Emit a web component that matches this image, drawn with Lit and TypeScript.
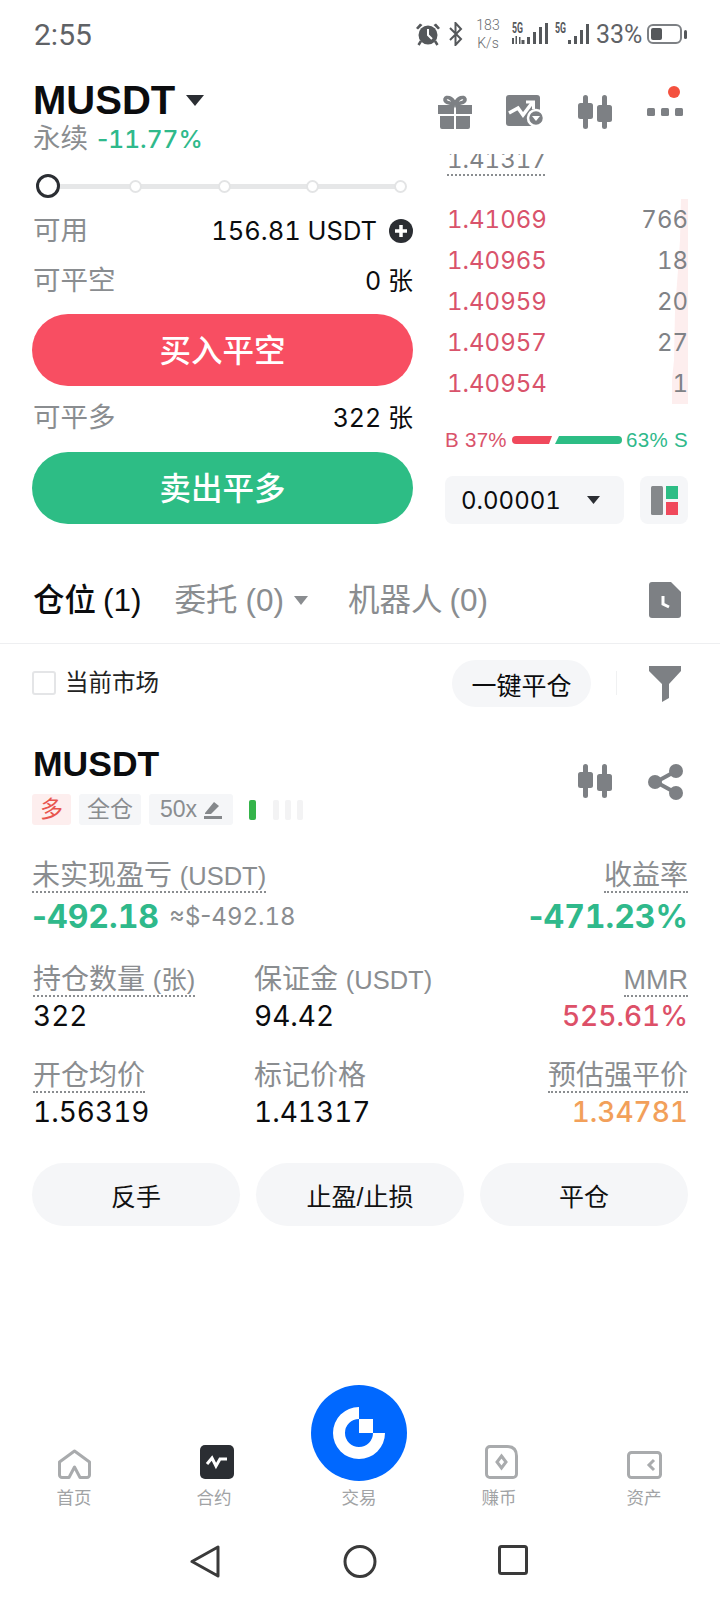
import { LitElement, html, css } from "lit";
import { customElement } from "lit/decorators.js";

const candle = html`<svg class="ic" width="34" height="34" viewBox="0 0 34 34"><g fill="#7d8084"><rect x="5" y="0" width="5" height="34" rx="2.500"/><rect x="0" y="8" width="15" height="16" rx="2.500"/><rect x="24" y="0" width="5" height="34" rx="2.500"/><rect x="19" y="10" width="15" height="17" rx="2.500"/></g></svg>`;

const rows = [["1.41069", "766"], ["1.40965", "18"], ["1.40959", "20"], ["1.40957", "27"], ["1.40954", "1"]];

@customElement("app-root")
export class AppRoot extends LitElement {
  static styles = css`
    :host { display: block; width: 720px; height: 1600px; background: #fff; color: #0b0c0e; overflow: hidden;
      font-family: "Liberation Sans", "Noto Sans CJK SC", sans-serif; }
    * { box-sizing: border-box; }
    .page { display: flex; flex-direction: column; height: 1600px; }
    svg { display: block; flex: none; }
    .num { font-family: Inter, "Noto Sans CJK SC", sans-serif; font-variant-numeric: tabular-nums; }
    .m { font-style: normal; font-variant-numeric: normal; }

    .status { height: 68px; display: flex; align-items: center; padding: 0 0 0 34px; color: #5f6266; flex: none; }
    .time { font: 400 30px Roboto, sans-serif; width: 381px; flex: none; }
    .speed { font: 300 14px/18px Roboto, sans-serif; width: 36px; margin-left: 7px; text-align: center; color: #6a6d70; flex: none; }
    .sig { margin-left: 7px; }
    .s5 { font: 700 14px Roboto, sans-serif; fill: #55585b; }
    .batt { font: 400 25px Roboto, sans-serif; margin-left: 5px; flex: none; }

    .head { height: 86px; flex: none; padding: 8px 37px 0 33px; display: flex; justify-content: space-between; }
    .title { font-size: 40px; font-weight: 700; line-height: 42px; display: flex; align-items: center; gap: 11px; margin-top: 3px; }
    .sub { font-size: 27.5px; line-height: 34px; color: #8a8d90; display: flex; gap: 9px; margin-top: 1px; align-items: center; }
    .sub b { color: #2fb98b; font-weight: 500; font-size: 24.5px; }
    .head-ic { display: flex; gap: 34px; margin-top: 19px; position: relative; align-items: flex-start; }
    .dots { margin-left: 1px; margin-top: 13px; }
    .red-dot { position: absolute; right: 3px; top: -9px; width: 12px; height: 12px; border-radius: 50%; background: #f4513f; }

    .main { flex: none; display: flex; gap: 32px; padding: 0 32px; height: 370px; }
    .left { width: 381px; display: flex; flex-direction: column; }
    .slider { height: 24px; margin-top: 20px; position: relative; display: flex; align-items: center; gap: 75.3px; padding: 0 0 0 4px; }
    .slider::before { content: ""; position: absolute; left: 20px; right: 12px; top: 10px; height: 5px; background: #e6e7e8; }
    .knob { position: relative; width: 24px; height: 24px; border: 3px solid #2b2e33; border-radius: 50%; background: #fff; margin-right: -6px; }
    .tick { position: relative; width: 13px; height: 13px; border: 2px solid #e3e4e5; border-radius: 50%; background: #fff; }
    .kv { display: flex; justify-content: space-between; align-items: center; height: 50px; font-size: 27.5px; line-height: 36px; color: #8a8d90; padding-left: 1px; }
    .kv span:last-child { color: #0b0c0e; }
    .val { display: flex; align-items: center; gap: 12px; font-size: 25.5px; }
    .val-plain { font-size: 25px; }
    .first { margin-top: 8px; }
    .btn { height: 72px; border-radius: 36px; color: #fff; font-size: 31.5px; font-weight: 500; display: flex; align-items: center; justify-content: center; flex: none; padding-bottom: 4px; }
    .buy { background: #f84e62; margin-top: 8px; }
    .sell { background: #2dbd85; margin-top: 9px; }
    .k3 { margin-top: 7px; }

    .right { width: 243px; display: flex; flex-direction: column; }
    .clip { height: 22px; overflow: hidden; position: relative; margin-left: 2px; width: 98px; border-bottom: 2px dotted #8a8d90; flex: none; }
    .clip span { position: absolute; left: 0; bottom: 0; font-size: 24px; line-height: 28px; color: #7f8286; }
    .book { position: relative; margin-top: 23px; height: 205px; flex: none; }
    .depth { position: absolute; right: 0; top: 0; }
    .row { position: relative; height: 41px; display: flex; justify-content: space-between; align-items: center; font-size: 24px; padding-left: 2px; color: #7f8286; }
    .row b { font-weight: 400; color: #d9536b; }
    .senti { display: flex; align-items: center; height: 24px; margin-top: 24px; font-size: 20.500px; justify-content: space-between; flex: none; letter-spacing: .3px; }
    .senti .r { color: #d9536b; }
    .senti .g { color: #2fb98b; }
    .tools { display: flex; gap: 16px; margin-top: 24px; flex: none; }
    .sel { width: 179px; height: 48px; background: #f5f6f8; border-radius: 8px; display: flex; align-items: center; justify-content: space-between; padding: 0 24px 0 16px; font-size: 24px; }
    .lay { width: 48px; height: 48px; background: #f5f6f8; border-radius: 8px; display: flex; align-items: center; justify-content: center; }

    .tabs { flex: none; height: 120px; padding: 52px 39px 0 33px; display: flex; border-bottom: 1px solid #eeeff1; font-size: 31.5px; color: #8a8d90; align-items: flex-start; line-height: 48px; }
    .tab { display: flex; align-items: center; gap: 7px; }
    .tab.on { color: #0b0c0e; font-weight: 500; }
    .t2 { margin-left: 33px; gap: 8px; }
    .t3 { margin-left: 40px; }
    .doc { margin-left: auto; margin-top: 6px; }

    .filter { flex: none; height: 81px; padding: 16px 39px 0 32px; display: flex; align-items: flex-start; }
    .check { width: 24px; height: 24px; border: 2px solid #e4e5e7; border-radius: 3px; margin-top: 11px; }
    .flabel { font-size: 23.5px; line-height: 47px; margin-left: 9px; color: #222; }
    .pill { margin-left: auto; width: 139px; height: 47px; border-radius: 24px; background: #f5f6f8; font-size: 25px; display: flex; align-items: center; justify-content: center; }
    .sep { width: 1px; height: 24px; background: #f0f1f2; margin: 11px 32px 0 25px; }
    .fun { margin-top: 6px; }

    .card { flex: none; padding: 0 32px; }
    .chead { display: flex; justify-content: space-between; }
    .cname { font-size: 35.5px; font-weight: 700; line-height: 40px; padding-left: 1px; margin-top: 19px; }
    .cic { display: flex; gap: 36px; margin-top: 39px; margin-right: 4px; margin-bottom: -6px; }
    .tags { display: flex; gap: 8px; align-items: center; height: 31px; }
    .tag { height: 31px; background: #f5f6f8; color: #8a8d90; font-size: 23px; line-height: 31px; border-radius: 3px; display: flex; align-items: center; justify-content: center; gap: 7px; }
    .t-a { width: 39px; background: #fdeeee; color: #e8554e; }
    .t-b { width: 62px; }
    .t-c { width: 84px; }
    .bars { display: flex; gap: 6px; margin-left: 8px; }
    .bars i { width: 6px; height: 20px; background: #f3f3f4; border-radius: 2px; }
    .bars i:first-child { background: #35b44a; width: 7px; margin-right: 11px; }

    .l { font-size: 28px; color: #8a8d90; line-height: 30px; height: 32px; white-space: nowrap; }
    .lat { font-size: 25.5px; }
    .lat2 { font-size: 27px; }
    .dot { border-bottom: 2px dotted #8a8d90; display: inline-block; }
    .pnl { display: flex; justify-content: space-between; align-items: flex-start; margin-top: 36px; }
    .pnl > div:last-child { text-align: right; }
    .big { font-size: 32px; font-weight: 700; color: #2fb98b; line-height: 40px; display: flex; align-items: center; gap: 10px; margin-top: 4px; white-space: nowrap; }
    .big span { font-size: 24px; font-weight: 400; color: #8a8d90; }
    .big.end { justify-content: flex-end; }
    .stats { display: grid; grid-template-columns: 221px 222px 1fr; padding-left: 1px; }
    .stats > div:nth-child(3n) { text-align: right; }
    .s1 { margin-top: 28px; }
    .s2 { margin-top: 27px; }
    .v { font-size: 28px; line-height: 36px; color: #0b0c0e; margin-top: 1px; }
    .v.red { color: #dd5068; font-weight: 500; }
    .v.org { color: #f2a05a; font-weight: 500; }
    .acts { display: flex; gap: 16px; margin-top: 33px; }
    .act { flex: 1; height: 63px; border-radius: 32px; background: #f5f6f8; font-size: 25px; display: flex; align-items: center; justify-content: center; color: #111; }

    .nav { margin-top: auto; flex: none; height: 102px; display: flex; gap: 100px; padding-left: 54px; align-items: flex-end; }
    .ni { position: relative; width: 40px; display: flex; flex-direction: column; align-items: center; font-size: 17.5px; line-height: 24px; color: #a1a3a5; white-space: nowrap; gap: 7px; height: 66px; justify-content: flex-end; }
    .shift { margin-left: 5px; }
    .nudge { margin-left: 5px; }
    .fab { position: absolute; left: -28px; top: -59px; width: 96px; height: 96px; border-radius: 50%; background: #0068ff; display: flex; align-items: center; justify-content: center; }
    .sys { flex: none; height: 90px; padding: 35px 0 0 190px; display: flex; gap: 121px; align-items: flex-start; }
  `;

  render() {
    return html`<div class="page">
      <div class="status">
        <div class="time">2:55</div>
        <svg width="26" height="24" viewBox="0 0 26 24"><g fill="#55585b"><circle cx="13" cy="13" r="9.500"/><path d="M1 6 5 1.500 7.500 3 3 7.500ZM25 6 21 1.500 18.500 3 23 7.500Z"/><path d="M6 19 3.500 23M20 19 22.500 23" stroke="#55585b" stroke-width="2.500"/></g><path d="M13 7v6l4 4" stroke="#fff" stroke-width="2" fill="none"/></svg>
        <svg style="margin-left:8px" width="14" height="24" viewBox="0 0 14 24" fill="none" stroke="#55585b" stroke-width="2"><path d="M1 6 12 17 6.500 23V1L12 7 1 18"/></svg>
        <div class="speed">183<br />K/s</div>
        <svg style="margin-left:6px" width="36" height="28" viewBox="0 -2 36 28"><text class="s5" x="0" y="11" textLength="11" lengthAdjust="spacingAndGlyphs">5G</text><g fill="#55585b"><rect x="0" y="16" width="2" height="6"/><rect x="3.500" y="14" width="1.500" height="8"/><rect x="7" y="15" width="1.500" height="7"/><rect x="9.500" y="18" width="3" height="4"/><rect x="15" y="15" width="3" height="7"/><rect x="21" y="10" width="3" height="12"/><rect x="27" y="5" width="3" height="17"/><rect x="33" y="1" width="3" height="21"/></g></svg>
        <svg class="sig" width="36" height="28" viewBox="0 -2 36 28"><text class="s5" x="0" y="11" textLength="11" lengthAdjust="spacingAndGlyphs">5G</text><g fill="#55585b"><rect x="13" y="18" width="3" height="4"/><rect x="19" y="14" width="3" height="8"/><rect x="25" y="8" width="3" height="14"/><rect x="31" y="2" width="3" height="20"/></g></svg>
        <div class="batt">33%</div>
        <svg style="margin-left:5px" width="40" height="22" viewBox="0 0 40 22"><rect x="1" y="2" width="33" height="18" rx="5" fill="none" stroke="#7d8084" stroke-width="2"/><rect x="4" y="5" width="11" height="12" rx="2" fill="#55585b"/><rect x="37" y="7" width="3" height="9" rx="1.500" fill="#55585b"/></svg>
      </div>

      <div class="head">
        <div>
          <div class="title">MUSDT<svg width="18" height="11" viewBox="0 0 18 11"><path d="M0 0h18L9 11Z" fill="#2b2e33"/></svg></div>
          <div class="sub">永续<b class="num"><i class="m">-</i>11.77%</b></div>
        </div>
        <div class="head-ic">
          <svg width="34" height="34" viewBox="0 0 34 34"><g fill="#7d8084"><path d="M0 10h16v9H0ZM18 10H34v9H18ZM2 21h14v13H4a2 2 0 0 1-2-2ZM18 21H32v11a2 2 0 0 1-2 2H18Z"/></g><path d="M17 9C14 2 8 1 7 4 6.500 7 10 8.500 17 9c7-.5 10.500-2 10-5C26 1 20 2 17 9Z" fill="none" stroke="#7d8084" stroke-width="3.500"/></svg>
          <svg width="38" height="32" viewBox="0 0 38 32"><rect x="0" y="0" width="34" height="31" rx="3" fill="#7d8084"/><path d="M3 18 12 13 17 20 26 8" fill="none" stroke="#fff" stroke-width="3.500"/><path d="M20 7h7.500v7" fill="none" stroke="#fff" stroke-width="3"/><circle cx="30" cy="23" r="8" fill="#7d8084" stroke="#fff" stroke-width="2.500"/><path d="M26 21h8l-4 5Z" fill="#fff"/></svg>
          ${candle}
          <svg class="dots" width="36" height="8" viewBox="0 0 36 8"><g fill="#7d8084"><rect width="8" height="8" rx="1.500"/><rect x="14" width="8" height="8" rx="1.500"/><rect x="28" width="8" height="8" rx="1.500"/></g></svg>
          <div class="red-dot"></div>
        </div>
      </div>

      <div class="main">
        <div class="left">
          <div class="slider">
            <div class="knob"></div><div class="tick"></div><div class="tick"></div><div class="tick"></div><div class="tick"></div>
          </div>
          <div class="kv first"><span>可用</span><span class="val num">156.81 USDT<svg width="24" height="24" viewBox="0 0 24 24"><circle cx="12" cy="12" r="12" fill="#2b2e33"/><path d="M12 6v12M6 12h12" stroke="#fff" stroke-width="3.500"/></svg></span></div>
          <div class="kv"><span>可平空</span><span class="val-plain num">0 张</span></div>
          <div class="btn buy">买入平空</div>
          <div class="kv k3"><span>可平多</span><span class="val-plain num">322 张</span></div>
          <div class="btn sell">卖出平多</div>
        </div>
        <div class="right">
          <div class="clip num"><span>1.41317</span></div>
          <div class="book num">
            <svg class="depth" width="18" height="205" viewBox="0 0 18 205"><path d="M11 0h7v205H2v-24l2-20 1-50 3-40 2-30Z" fill="#fdeeee"/></svg>
            ${rows.map(([p, q]) => html`<div class="row"><b>${p}</b><span>${q}</span></div>`)}
          </div>
          <div class="senti">
            <span class="r">B 37%</span>
            <svg width="110" height="8" viewBox="0 0 110 8"><path d="M4 0h36l-3 8H4a4 4 0 0 1 0-8Z" fill="#f0495c"/><path d="M47 0h59a4 4 0 0 1 0 8H43Z" fill="#2dbd85"/></svg>
            <span class="g">63% S</span>
          </div>
          <div class="tools">
            <div class="sel num">0.00001<svg width="13" height="8" viewBox="0 0 13 8"><path d="M0 0h13L6.500 8Z" fill="#2b2e33"/></svg></div>
            <div class="lay"><svg width="27" height="29" viewBox="0 0 27 29"><rect width="12" height="29" rx="1.500" fill="#85888b"/><rect x="15" width="12" height="13" fill="#2dbd85"/><rect x="15" y="16" width="12" height="13" fill="#f0495c"/></svg></div>
          </div>
        </div>
      </div>

      <div class="tabs">
        <div class="tab on">仓位<span>(1)</span></div>
        <div class="tab t2">委托<span>(0)</span><svg style="margin-left:2px" width="14" height="9" viewBox="0 0 14 9"><path d="M0 0h14L7 9Z" fill="#8a8d90"/></svg></div>
        <div class="tab t3">机器人<span>(0)</span></div>
        <svg class="doc" width="32" height="36" viewBox="0 0 32 36"><path d="M3 0H22L32 10V33a3 3 0 0 1-3 3H3a3 3 0 0 1-3-3V3a3 3 0 0 1 3-3Z" fill="#7d8084"/><path d="M14 14v8l6 3" fill="none" stroke="#fff" stroke-width="3"/></svg>
      </div>

      <div class="filter">
        <div class="check"></div>
        <div class="flabel">当前市场</div>
        <div class="pill">一键平仓</div>
        <div class="sep"></div>
        <svg class="fun" width="32" height="36" viewBox="0 0 32 36"><path d="M0 0h32v5L20 18V32l-7 4V18L0 5Z" fill="#7d8084"/></svg>
      </div>

      <div class="card">
        <div class="chead">
          <div class="cname">MUSDT</div>
          <div class="cic">
            ${candle}
            <svg width="36" height="36" viewBox="0 0 36 36"><path d="M28 7 8 18 28 29" fill="none" stroke="#7d8084" stroke-width="4"/><g fill="#7d8084"><circle cx="28" cy="7" r="7"/><circle cx="7" cy="18" r="7"/><circle cx="28" cy="29" r="7"/></g></svg>
          </div>
        </div>
        <div class="tags">
          <div class="tag t-a">多</div>
          <div class="tag t-b">全仓</div>
          <div class="tag t-c"><span>50x</span><svg width="18" height="18" viewBox="0 0 18 18"><path d="M0 18h18v-3H0ZM1 12 10 1l5 4-8 8H1Z" fill="#85888b"/></svg></div>
          <div class="bars"><i></i><i></i><i></i><i></i></div>
        </div>

        <div class="pnl">
          <div>
            <div class="l"><span class="dot">未实现盈亏 <span class="lat">(USDT)</span></span></div>
            <div class="big num"><div><i class="m">-</i>492.18</div> <span class="num"><i class="m">≈$-</i>492.18</span></div>
          </div>
          <div>
            <div class="l"><span class="dot">收益率</span></div>
            <div class="big end num"><div><i class="m">-</i>471.23%</div></div>
          </div>
        </div>

        <div class="stats s1">
          <div><div class="l"><span class="dot">持仓数量 <span class="lat">(张)</span></span></div><div class="v num">322</div></div>
          <div><div class="l">保证金 <span class="lat">(USDT)</span></div><div class="v num">94.42</div></div>
          <div><div class="l"><span class="dot lat2">MMR</span></div><div class="v red num">525.61%</div></div>
        </div>
        <div class="stats s2">
          <div><div class="l"><span class="dot">开仓均价</span></div><div class="v num">1.56319</div></div>
          <div><div class="l">标记价格</div><div class="v num">1.41317</div></div>
          <div><div class="l"><span class="dot">预估强平价</span></div><div class="v org num">1.34781</div></div>
        </div>

        <div class="acts">
          <div class="act">反手</div><div class="act">止盈/止损</div><div class="act">平仓</div>
        </div>
      </div>

      <div class="nav">
        <div class="ni"><svg width="33" height="30" viewBox="0 0 33 30" fill="none" stroke="#a9abad" stroke-width="3"><path d="M16.500 2 31.500 13V26a2.500 2.500 0 0 1-2.500 2.500H22L16.500 18 11 28.500H4A2.500 2.500 0 0 1 1.500 26V13Z" stroke-linejoin="round"/></svg>首页</div>
        <div class="ni"><svg class="nudge" width="34" height="34" viewBox="0 0 34 34"><rect width="34" height="34" rx="5" fill="#2b2e33"/><path d="M7 19 12 13 16 21 20 14 27 14" fill="none" stroke="#fff" stroke-width="3"/></svg>合约</div>
        <div class="ni shift">
          <div class="fab"><svg width="52" height="52" viewBox="0 0 52 52"><path d="M26 0a26 26 0 1 0 26 26H40A14 14 0 1 1 26 12Z" fill="#fff"/><rect x="26" y="12" width="14" height="14" fill="#fff"/></svg></div>
          交易
        </div>
        <div class="ni"><svg class="nudge" width="33" height="34" viewBox="0 0 33 34" fill="none" stroke="#a9abad" stroke-width="3"><path d="M5 1.500H22Q31.500 1.500 31.500 11V29a3.500 3.500 0 0 1-3.500 3.500H5A3.500 3.500 0 0 1 1.500 29V5A3.500 3.500 0 0 1 5 1.500Z"/><path d="M16.500 11 21 17 16.500 23 12 17Z"/></svg>赚币</div>
        <div class="ni shift"><svg width="35" height="28" viewBox="0 0 35 28" fill="none" stroke="#a9abad" stroke-width="3"><rect x="1.500" y="1.500" width="32" height="25" rx="3"/><path d="M27 9 22 14 27 19"/></svg>资产</div>
      </div>

      <div class="sys">
        <svg width="30" height="33" viewBox="0 0 30 33" fill="none" stroke="#3a3a3a" stroke-width="3" stroke-linejoin="round"><path d="M28 2V31L2 16.500Z"/></svg>
        <svg style="margin-left:2px" width="34" height="33" viewBox="0 0 34 33" fill="none" stroke="#3a3a3a" stroke-width="3"><circle cx="17" cy="16.500" r="15"/></svg>
        <svg width="30" height="30" viewBox="0 0 30 30" fill="none" stroke="#3a3a3a" stroke-width="3"><rect x="1.500" y="1.500" width="27" height="27" rx="2"/></svg>
      </div>
    </div>`;
  }
}
